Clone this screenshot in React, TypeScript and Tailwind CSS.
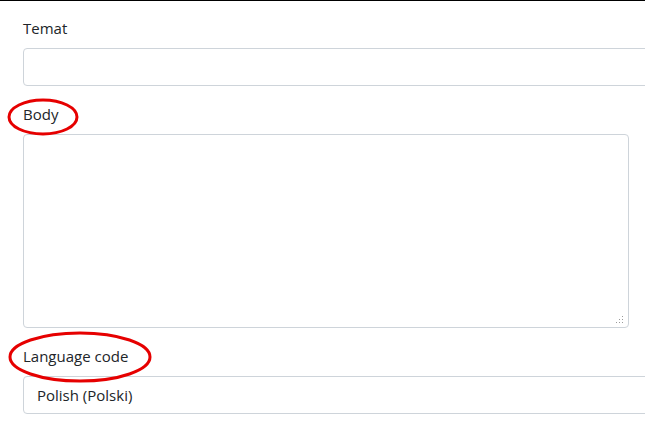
const labelCls = "block text-[15px] leading-6 text-[#212529] mb-2";

function Field({ label, children }: { label: string; children: React.ReactNode }) {
  return (
    <div className="mb-4">
      <label className={labelCls}>{label}</label>
      {children}
    </div>
  );
}

export default function App() {
  return (
    <div
      className="relative w-[645px] h-[425px] overflow-hidden bg-white border-t border-black"
      style={{ fontFamily: '"Open Sans", "Noto Sans", sans-serif' }}
    >
      <div className="pl-[23px] pt-[15px]">
        <Field label="Temat">
          <div className="w-[700px] h-[38px] rounded border border-[#ced4da] bg-white" />
        </Field>

        <Field label="Body">
          <div className="relative w-[606px] h-[194px] rounded border border-[#ced4da] bg-white">
            <svg className="absolute right-[4px] bottom-[3px]" width="8" height="8" viewBox="0 0 8 8">
              <g fill="#9a9a9a">
                <rect x="6" y="0" width="1" height="1" />
                <rect x="3" y="3" width="1" height="1" />
                <rect x="6" y="3" width="1" height="1" />
                <rect x="0" y="6" width="1" height="1" />
                <rect x="3" y="6" width="1" height="1" />
                <rect x="6" y="6" width="1" height="1" />
              </g>
            </svg>
          </div>
        </Field>

        <Field label="Language code">
          <div className="w-[700px] h-[38px] rounded border border-[#ced4da] bg-white flex items-center pl-[13px] text-[15px] text-[#212529]">
            Polish (Polski)
          </div>
        </Field>
      </div>

      {/* red annotation rings */}
      <svg className="absolute left-0 top-0 pointer-events-none" width="645" height="425">
        <ellipse cx="43" cy="116" rx="34" ry="17" fill="none" stroke="#e60000" strokeWidth="3" />
        <ellipse cx="80" cy="356" rx="70" ry="24" fill="none" stroke="#e60000" strokeWidth="3" />
      </svg>
    </div>
  );
}
